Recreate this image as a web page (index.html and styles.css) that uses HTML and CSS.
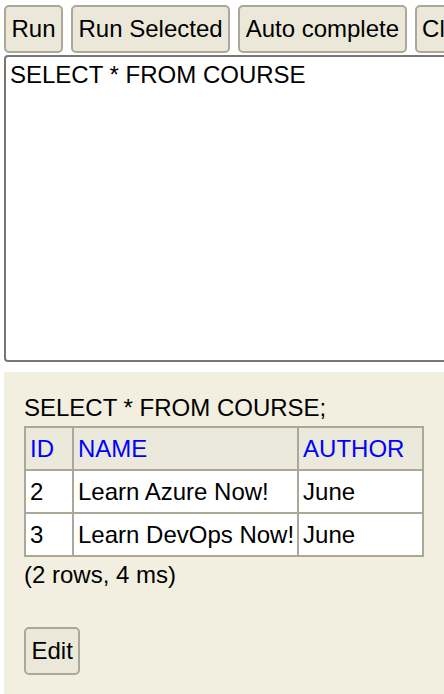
FILE: index.html
```html
<!DOCTYPE html>
<html>
<head>
<meta charset="utf-8">
<link rel="stylesheet" href="styles.css">
</head>
<body>
<div class="toolbar">
  <button class="btn">Run</button>
  <button class="btn">Run Selected</button>
  <button class="btn">Auto complete</button>
  <button class="btn">Clear</button>
</div>
<textarea class="sql">SELECT * FROM COURSE</textarea>
<div class="result">
  <div class="stmt">SELECT * FROM COURSE;</div>
  <table class="grid">
    <tr><th><a href="#">ID</a></th><th><a href="#">NAME</a></th><th><a href="#">AUTHOR</a></th></tr>
    <tr><td>2</td><td>Learn Azure Now!</td><td>June</td></tr>
    <tr><td>3</td><td>Learn DevOps Now!</td><td>June</td></tr>
  </table>
  <div class="info">(2 rows, 4 ms)</div>
  <button class="btn edit">Edit</button>
</div>
</body>
</html>
```
FILE: styles.css
```css
html { overflow: hidden; }
body {
  margin: 0;
  padding: 0 0 0 4px;
  font-family: "Liberation Sans", Arial, sans-serif;
  font-size: 24px;
  line-height: 28px;
  color: #000;
  background: #fff;
  width: 700px;
}
.toolbar {
  display: flex;
  flex-wrap: nowrap;
  gap: 8px;
  margin-top: 5px;
}
.btn {
  font-family: "Liberation Sans", Arial, sans-serif;
  font-size: 24px;
  line-height: 28px;
  height: 48px;
  padding: 0 5.5px;
  background: #ebe8da;
  border: 2px solid #aca899;
  border-radius: 5px;
  color: #000;
  white-space: nowrap;
  flex: none;
}
.sql {
  display: block;
  box-sizing: border-box;
  margin: 2px 0 0 0;
  width: 600px;
  height: 307px;
  padding: 4px 4px;
  border: 2px solid #767676;
  border-radius: 4px;
  font-family: "Liberation Sans", Arial, sans-serif;
  font-size: 24px;
  line-height: 28px;
  resize: none;
  color: #000;
  background: #fff;
}
.result {
  margin-top: 10px;
  background: #f2efe1;
  padding: 22px 20px 40px 20px;
  min-height: 300px;
}
.stmt { height: 28px; }
.grid {
  margin-top: 4px;
  border-collapse: collapse;
}
.grid th, .grid td {
  border: 2px solid #aca899;
  font-weight: normal;
  text-align: left;
  line-height: 27px;
  vertical-align: top;
}
.grid th {
  background: #ebe9db;
  padding: 7px 18px 7px 4px;
}
.grid td {
  background: #fff;
  padding: 7px 3px 7px 4px;
}
.grid a { color: #0000ff; text-decoration: none; }
.info { margin-top: 4px; height: 28px; }
.edit { margin-top: 38px; }
```
